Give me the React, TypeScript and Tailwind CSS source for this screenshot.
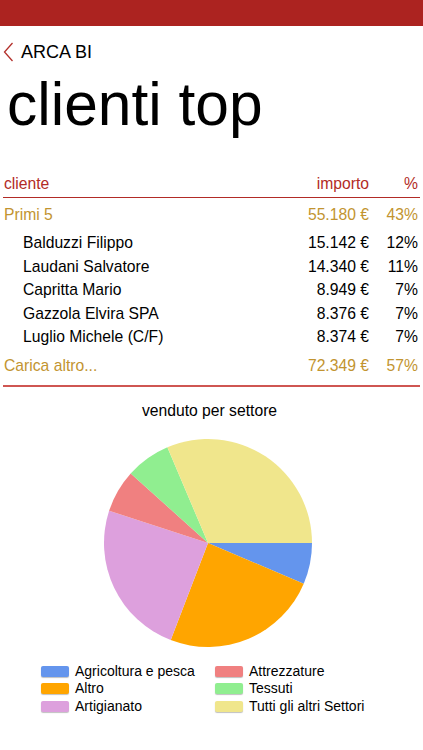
import React from "react";

const slices = [
  { a0: 0, a1: 23, c: "#6495ed" },
  { a0: 23, a1: 111, c: "#ffa500" },
  { a0: 111, a1: 198, c: "#dda0dd" },
  { a0: 198, a1: 222, c: "#f08080" },
  { a0: 222, a1: 247, c: "#90ee90" },
  { a0: 247, a1: 360, c: "#f0e68c" },
];

function arc(cx: number, cy: number, r: number, a0: number, a1: number) {
  const t0 = (a0 * Math.PI) / 180;
  const t1 = (a1 * Math.PI) / 180;
  const x0 = cx + r * Math.cos(t0);
  const y0 = cy + r * Math.sin(t0);
  const x1 = cx + r * Math.cos(t1);
  const y1 = cy + r * Math.sin(t1);
  const large = a1 - a0 > 180 ? 1 : 0;
  return `M${cx},${cy} L${x0.toFixed(2)},${y0.toFixed(2)} A${r},${r} 0 ${large} 1 ${x1.toFixed(2)},${y1.toFixed(2)} Z`;
}

const rows = [
  ["Balduzzi Filippo", "15.142 €", "12%"],
  ["Laudani Salvatore", "14.340 €", "11%"],
  ["Capritta Mario", "8.949 €", "7%"],
  ["Gazzola Elvira SPA", "8.376 €", "7%"],
  ["Luglio Michele (C/F)", "8.374 €", "7%"],
];

const legend = [
  ["#6495ed", "Agricoltura e pesca"],
  ["#f08080", "Attrezzature"],
  ["#ffa500", "Altro"],
  ["#90ee90", "Tessuti"],
  ["#dda0dd", "Artigianato"],
  ["#f0e68c", "Tutti gli altri Settori"],
];

export default function App() {
  return (
    <div className="w-[423px] h-[750px] bg-white overflow-hidden text-black" style={{ fontFamily: '"Liberation Sans", Arial, sans-serif' }}>
      <div className="h-[26px] bg-[#ac2320]" />
      <div className="mt-[15px] h-[22px] flex items-center pl-[3px]">
        <svg width="11" height="20" viewBox="0 0 11 20" className="shrink-0">
          <path d="M9.5 1 L1.5 10 L9.5 19" fill="none" stroke="#b3302b" strokeWidth="1.3" />
        </svg>
        <span className="ml-[7px] text-[18px] leading-[22px]">ARCA BI</span>
      </div>
      <div className="mt-[11px] pl-[7px] text-[60.5px] leading-[60px]">clienti top</div>

      <div className="mt-[38px] px-[3px]">
        <div className="grid grid-cols-[1fr_auto_50px] text-[15.7px] leading-[24px] text-[#b22b26] border-b border-[#b22b26] px-[1px] pb-[1px]">
          <span>cliente</span>
          <span className="text-right">importo</span>
          <span className="text-right pr-[1px]">%</span>
        </div>
        <div className="mt-[5px] grid grid-cols-[1fr_auto_50px] text-[15.7px] leading-[24px] text-[#c29430] px-[1px]">
          <span>Primi 5</span>
          <span className="text-right">55.180 €</span>
          <span className="text-right pr-[1px]">43%</span>
        </div>
        <div className="mt-[4px]">
          {rows.map((r) => (
            <div key={r[0]} className="grid grid-cols-[1fr_auto_50px] text-[15.7px] leading-[23.5px] px-[1px]">
              <span className="pl-[19px]">{r[0]}</span>
              <span className="text-right">{r[1]}</span>
              <span className="text-right pr-[1px]">{r[2]}</span>
            </div>
          ))}
        </div>
        <div className="mt-[5px] grid grid-cols-[1fr_auto_50px] text-[15.7px] leading-[24px] text-[#c29430] px-[1px] pb-[7px] border-b-2 border-[#cf5652]">
          <span>Carica altro...</span>
          <span className="text-right">72.349 €</span>
          <span className="text-right pr-[1px]">57%</span>
        </div>
      </div>

      <div className="mt-[14px] text-center text-[15.7px] leading-[20px] pr-[4px]">venduto per settore</div>
      <div className="mt-[16px] flex justify-center pr-[7px]">
        <svg width="212" height="212" viewBox="0 0 212 212">
          {slices.map((s) => (
            <path key={s.c} d={arc(106, 106, 104, s.a0, s.a1)} fill={s.c} />
          ))}
        </svg>
      </div>
      <div className="mt-[14px] grid grid-cols-[174px_auto] pl-[41px]">
        {legend.map(([c, t]) => (
          <div key={t} className="flex items-center h-[17.5px]">
            <div className="w-[28px] h-[11px] rounded-[2px] shadow-[0_1px_1px_rgba(0,0,0,0.25)]" style={{ backgroundColor: c }} />
            <span className="ml-[6px] text-[14px] leading-[17px]">{t}</span>
          </div>
        ))}
      </div>
    </div>
  );
}
